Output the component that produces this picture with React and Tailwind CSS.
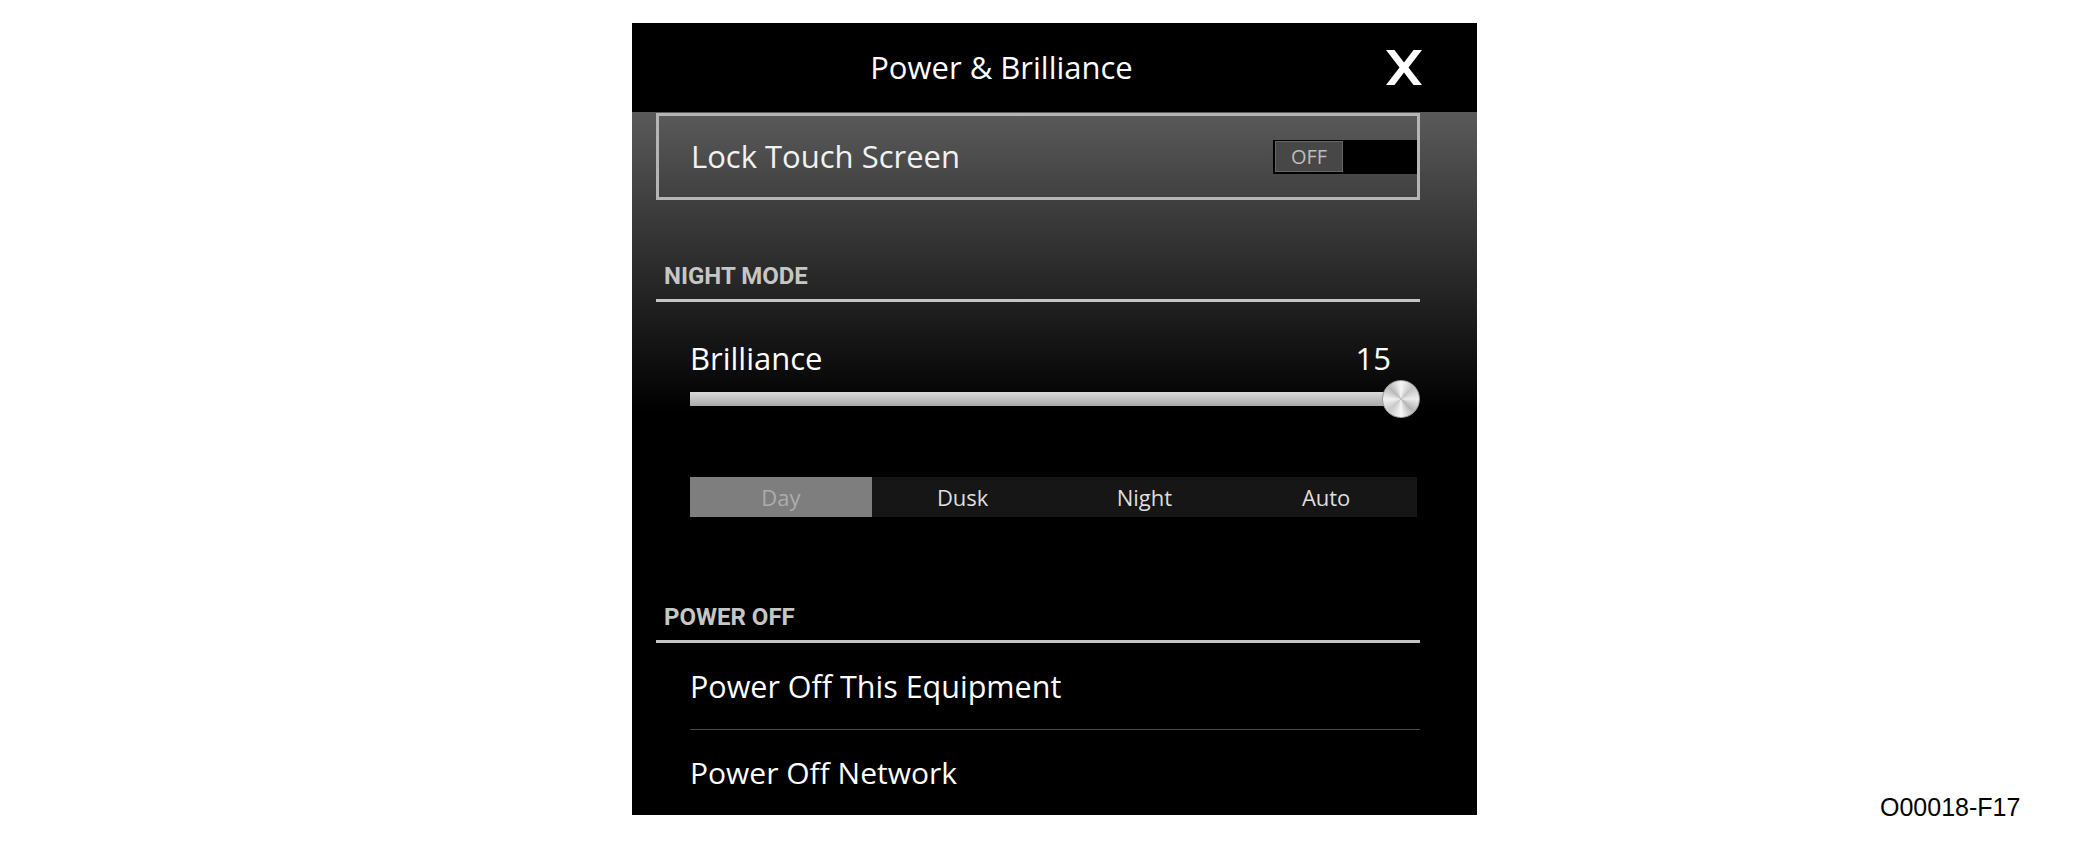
import React from "react";

const SectionHeader = ({ title }) => (
  <div>
    <div className="h-[47px] flex items-center pl-[8px] font-['Roboto',sans-serif] font-bold text-[24px] text-[#c6c6c6]">
      {title}
    </div>
    <div className="h-[3px] bg-[#c4c4c4]" />
  </div>
);

const CloseIcon = () => (
  <svg width="36" height="35" viewBox="0 0 36 35" fill="#fff">
    <polygon points="0,0 8.5,0 18,12.5 27.5,0 36,0 22.5,17.5 36,35 27.5,35 18,22.5 8.5,35 0,35 13.5,17.5" />
  </svg>
);

const modes = ["Day", "Dusk", "Night", "Auto"];

const App = () => {
  const selected = "Day";

  return (
    <div className="w-[2100px] h-[855px] bg-white flex items-start pl-[632px] pt-[23px]">
      <div className="w-[845px] bg-black font-['Open_Sans',sans-serif]">
        {/* header */}
        <div className="h-[89px] flex items-center">
          <div className="flex-1 text-center text-white text-[31px] leading-none">
            Power &amp; Brilliance
          </div>
          <div className="w-[106px] pl-[15px] flex items-center">
            <CloseIcon />
          </div>
        </div>

        <div className="pl-[24px] pr-[57px] pt-[1px] bg-[linear-gradient(to_bottom,#5a5a5a,#000_300px)]">
          {/* lock touch screen */}
          <div className="h-[87px] border-[3px] border-[#b5b5b5] flex items-center justify-between pl-[32px]">
            <span className="text-[31px] text-[#f2f2f2] leading-none">Lock Touch Screen</span>
            <div className="w-[144px] h-[34px] bg-black flex items-center pl-[2px]">
              <div className="w-[68px] h-[31px] bg-[#474747] border border-[#666] flex items-center justify-center text-[20px] text-[#bdbdbd] leading-none">
                OFF
              </div>
            </div>
          </div>

          <div className="mt-[52px]">
            <SectionHeader title="NIGHT MODE" />
          </div>

          {/* brilliance */}
          <div className="mt-[36px] pl-[34px]">
            <div className="h-[40px] flex items-center justify-between pr-[29px] text-[31px] text-white leading-none">
              <span>Brilliance</span>
              <span>15</span>
            </div>
            <div className="mt-[2px] h-[38px] relative flex items-center">
              <div className="w-[711px] h-[14px] bg-[linear-gradient(to_bottom,#dadada,#bdbdbd_60%,#a9a9a9)]" />
              <div className="absolute left-[692px] top-0 w-[38px] h-[38px] rounded-full border border-[#9a9a9a] bg-[conic-gradient(#f6f6f6,#c4c4c4,#ededed,#b4b4b4,#f6f6f6,#c9c9c9,#f1f1f1,#b8b8b8,#f6f6f6)]" />
            </div>
          </div>

          {/* mode selector */}
          <div className="mt-[59px] ml-[34px] w-[727px] h-[40px] grid grid-cols-4 bg-[#161616] text-[22px] leading-none">
            {modes.map((m) => (
              <div
                key={m}
                className={
                  m === selected
                    ? "flex items-center justify-center bg-[#7e7e7e] text-[#acacac]"
                    : "flex items-center justify-center text-[#dedede]"
                }
              >
                {m}
              </div>
            ))}
          </div>

          <div className="mt-[76px]">
            <SectionHeader title="POWER OFF" />
          </div>

          <div className="h-[86px] flex items-center pl-[34px] text-[30.5px] text-white leading-none">
            Power Off This Equipment
          </div>
          <div className="ml-[34px] h-px bg-[#4a4a4a]" />
          <div className="h-[85px] flex items-center pl-[34px] text-[30px] text-white leading-none">
            Power Off Network
          </div>
        </div>
      </div>

      <div className="self-end mb-[34px] ml-[403px] font-['Liberation_Sans',Arial,sans-serif] text-[25px] leading-[28px] text-black">
        O00018-F17
      </div>
    </div>
  );
};

export default App;
